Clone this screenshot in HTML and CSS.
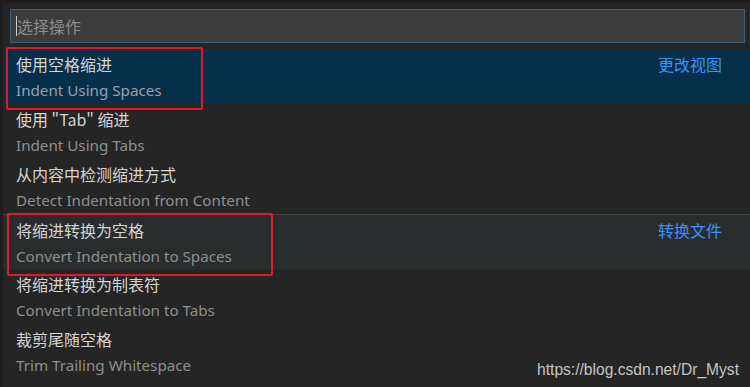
FILE: index.html
```html
<!DOCTYPE html>
<html lang="zh">
<head>
<meta charset="utf-8">
<link rel="stylesheet" href="styles.css">
</head>
<body>
<div class="palette">
  <div class="input-wrap">
    <div class="input"><span class="caret"></span><span class="placeholder">选择操作</span></div>
  </div>
  <ul class="list">
    <li class="row selected">
      <div class="text"><div class="label">使用空格缩进</div><div class="detail">Indent Using Spaces</div></div>
      <div class="group">更改视图</div>
    </li>
    <li class="row">
      <div class="text"><div class="label">使用 "Tab" 缩进</div><div class="detail">Indent Using Tabs</div></div>
    </li>
    <li class="row">
      <div class="text"><div class="label">从内容中检测缩进方式</div><div class="detail">Detect Indentation from Content</div></div>
    </li>
    <li class="row hover separator">
      <div class="text"><div class="label">将缩进转换为空格</div><div class="detail">Convert Indentation to Spaces</div></div>
      <div class="group">转换文件</div>
    </li>
    <li class="row">
      <div class="text"><div class="label">将缩进转换为制表符</div><div class="detail">Convert Indentation to Tabs</div></div>
    </li>
    <li class="row">
      <div class="text"><div class="label">裁剪尾随空格</div><div class="detail">Trim Trailing Whitespace</div></div>
    </li>
  </ul>
  <div class="mark mark-one"></div>
  <div class="mark mark-two"></div>
  <div class="watermark">https://blog.csdn.net/Dr_Myst</div>
</div>
</body>
</html>
```

FILE: styles.css
```css
html, body {
  margin: 0;
  padding: 0;
  background: #252526;
  overflow: hidden;
}
.palette {
  position: relative;
  width: 750px;
  height: 387px;
  background: #252526;
  box-sizing: border-box;
  border-top: 3px solid #1f1f1f;
  border-left: 3px solid #1e1e1e;
  font-family: "Noto Sans", "Noto Sans CJK SC", sans-serif;
}
.input-wrap {
  padding: 6px 5px 0 7px;
}
.input {
  height: 34px;
  box-sizing: border-box;
  border: 1px solid #3b6080;
  background: #3c3c3c;
  display: flex;
  align-items: center;
  padding-left: 5px;
}
.caret {
  width: 1px;
  height: 20px;
  background: #c8c8c8;
}
.placeholder {
  color: #8d8d8d;
  font-size: 16px;
  font-family: "Noto Sans CJK SC", sans-serif;
}
.list {
  list-style: none;
  margin: 6px 0 0 0;
  padding: 0;
}
.row {
  height: 55px;
  box-sizing: border-box;
  display: flex;
  justify-content: space-between;
  padding: 2px 28px 0 13px;
}
.row.selected {
  background: #062f4a;
}
.row.hover {
  background: #2a2d2e;
}
.row.separator {
  border-top: 1px solid #454545;
}
.label {
  color: #d4d4d4;
  font-size: 16px;
  line-height: 26px;
  font-family: "Noto Sans CJK SC", sans-serif;
}
.detail {
  color: #8f8f8f;
  font-size: 15.2px;
  line-height: 26px;
}
.selected .detail {
  color: #93a2ad;
}
.group {
  color: #3794ff;
  font-size: 16px;
  line-height: 26px;
  font-family: "Noto Sans CJK SC", sans-serif;
}
.mark {
  position: absolute;
  border: 2px solid #e3192b;
  border-radius: 2px;
  box-sizing: border-box;
}
.mark-one {
  left: 3px;
  top: 44px;
  width: 197px;
  height: 63px;
}
.mark-two {
  left: 4px;
  top: 210px;
  width: 266px;
  height: 63px;
}
.watermark {
  position: absolute;
  right: 11px;
  bottom: 8px;
  color: #c4c4c4;
  font-family: "Liberation Sans", Arial, sans-serif;
  font-size: 15.6px;
}
```
